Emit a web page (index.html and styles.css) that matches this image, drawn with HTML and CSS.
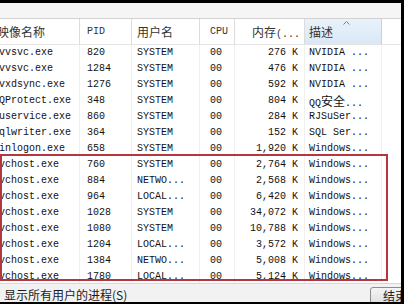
FILE: index.html
```html
<!DOCTYPE html>
<html lang="zh-CN">
  <head>
    <meta charset="UTF-8" />
    <title>任务管理器</title>
    <link rel="stylesheet" href="styles.css">
  </head>
  <body>
    <div class="window">
      <div class="toolbar"></div>
      <section class="list">
        <div class="row head">
          <span class="name"><span class="cjk">映像名称</span></span>
          <span class="pid">PID</span>
          <span class="user"><span class="cjk">用户名</span></span>
          <span class="cpu">CPU</span>
          <span class="mem"><span class="cjk">内存</span>(...</span>
          <span class="desc sorted">
            <span class="cjk">描述</span>
            <svg class="arrow" width="7" height="4" viewBox="0 0 7 4"><polyline points="0.5,3.5 3.5,0.5 6.5,3.5" fill="none" stroke="#6f8096" /></svg>
          </span>
          <span class="rest"></span>
        </div>

        <div class="row"><span class="name">nvvsvc.exe</span><span class="pid">820</span><span class="user">SYSTEM</span><span class="cpu">00</span><span class="mem">276 K</span><span class="desc">NVIDIA ...</span><span class="rest"></span></div>
        <div class="row"><span class="name">nvvsvc.exe</span><span class="pid">1284</span><span class="user">SYSTEM</span><span class="cpu">00</span><span class="mem">476 K</span><span class="desc">NVIDIA ...</span><span class="rest"></span></div>
        <div class="row"><span class="name">nvxdsync.exe</span><span class="pid">1276</span><span class="user">SYSTEM</span><span class="cpu">00</span><span class="mem">592 K</span><span class="desc">NVIDIA ...</span><span class="rest"></span></div>
        <div class="row"><span class="name">QQProtect.exe</span><span class="pid">348</span><span class="user">SYSTEM</span><span class="cpu">00</span><span class="mem">804 K</span><span class="desc">QQ<span class="cjk">安全</span>...</span><span class="rest"></span></div>
        <div class="row"><span class="name">suservice.exe</span><span class="pid">860</span><span class="user">SYSTEM</span><span class="cpu">00</span><span class="mem">284 K</span><span class="desc">RJSuSer...</span><span class="rest"></span></div>
        <div class="row"><span class="name">sqlwriter.exe</span><span class="pid">364</span><span class="user">SYSTEM</span><span class="cpu">00</span><span class="mem">152 K</span><span class="desc">SQL Ser...</span><span class="rest"></span></div>
        <div class="row"><span class="name">winlogon.exe</span><span class="pid">658</span><span class="user">SYSTEM</span><span class="cpu">00</span><span class="mem">1,920 K</span><span class="desc">Windows...</span><span class="rest"></span></div>
        <div class="row"><span class="name">svchost.exe</span><span class="pid">760</span><span class="user">SYSTEM</span><span class="cpu">00</span><span class="mem">2,764 K</span><span class="desc">Windows...</span><span class="rest"></span></div>
        <div class="row"><span class="name">svchost.exe</span><span class="pid">884</span><span class="user">NETWO...</span><span class="cpu">00</span><span class="mem">2,568 K</span><span class="desc">Windows...</span><span class="rest"></span></div>
        <div class="row"><span class="name">svchost.exe</span><span class="pid">964</span><span class="user">LOCAL...</span><span class="cpu">00</span><span class="mem">6,420 K</span><span class="desc">Windows...</span><span class="rest"></span></div>
        <div class="row"><span class="name">svchost.exe</span><span class="pid">1028</span><span class="user">SYSTEM</span><span class="cpu">00</span><span class="mem">34,072 K</span><span class="desc">Windows...</span><span class="rest"></span></div>
        <div class="row"><span class="name">svchost.exe</span><span class="pid">1080</span><span class="user">SYSTEM</span><span class="cpu">00</span><span class="mem">10,788 K</span><span class="desc">Windows...</span><span class="rest"></span></div>
        <div class="row"><span class="name">svchost.exe</span><span class="pid">1204</span><span class="user">LOCAL...</span><span class="cpu">00</span><span class="mem">3,572 K</span><span class="desc">Windows...</span><span class="rest"></span></div>
        <div class="row"><span class="name">svchost.exe</span><span class="pid">1384</span><span class="user">NETWO...</span><span class="cpu">00</span><span class="mem">5,008 K</span><span class="desc">Windows...</span><span class="rest"></span></div>
        <div class="row"><span class="name">svchost.exe</span><span class="pid">1780</span><span class="user">LOCAL...</span><span class="cpu">00</span><span class="mem">5,124 K</span><span class="desc">Windows...</span><span class="rest"></span></div>

        <div class="marker"></div>
      </section>
      <footer class="footer">
        <span class="cjk">显示所有用户的进程(S)</span>
        <button class="end"><span class="cjk">结束进程</span></button>
      </footer>
    </div>
  </body>
</html>
```

FILE: styles.css
```css
body {
  margin: 0;
  padding: 0;
  background-color: #000;
  font-family: "Liberation Mono", "Noto Sans CJK SC", monospace;
  font-size: 10px;
  color: #111;
}

.cjk {
  font-family: "Noto Sans CJK SC", sans-serif;
  font-size: 12px;
}

.window {
  width: 401px;
  height: 299px;
  margin-top: 3px;
  background-color: #f2f2f2;
  display: flex;
  flex-direction: column;
  overflow: hidden;
}

.toolbar {
  flex: none;
  height: 15px;
  background-color: #f5f5f5;
}

.list {
  position: relative;
  flex: none;
  height: 265px;
  box-sizing: border-box;
  background-color: #fff;
  border-top: 1px solid #d2d2d2;
  overflow: hidden;
}

.row {
  display: grid;
  grid-template-columns: 80px 52px 68px 35px 70px 77px 1fr;
  height: 16px;
  line-height: 16px;
  white-space: nowrap;
}

.row .cjk {
  line-height: 16px;
}

.row > span {
  display: block;
  box-sizing: border-box;
  overflow: hidden;
  border-right: 1px solid #f0f0f0;
}

.head {
  height: 26px;
  line-height: 25px;
  box-sizing: border-box;
  border-bottom: 1px solid #e4e4e4;
  color: #333;
}

.head .cjk {
  line-height: 25px;
}

.head > span {
  border-right: 1px solid #dcdcdc;
}

.name {
  text-indent: -7px;
}
.head .name {
  text-indent: -3px;
}
.pid {
  padding-left: 7px;
}
.user {
  padding-left: 5px;
}
.cpu {
  padding-left: 10px;
}
.mem {
  text-align: right;
  padding-right: 6px;
}
.head .mem {
  padding-right: 4px;
}
.desc {
  padding-left: 4px;
}

.head .sorted {
  position: relative;
  background: linear-gradient(#e9f2fb, #d9e8f6);
  border-right: 1px solid #bcd3ea;
}

.arrow {
  position: absolute;
  top: 2px;
  left: 38px;
}

.row .rest {
  border-right: none;
}

.marker {
  position: absolute;
  left: 0;
  top: 135px;
  width: 388px;
  height: 127px;
  box-sizing: border-box;
  border: 2px solid #b6363f;
}

.footer {
  flex: 1;
  display: flex;
  align-items: flex-start;
  border-top: 1px solid #d8d8d8;
  padding-left: 4px;
  line-height: 21px;
  color: #1a1a1a;
}

.end {
  margin: 3px -29px 0 auto;
  width: 60px;
  height: 20px;
  padding: 0 0 0 12px;
  text-align: left;
  line-height: 16px;
  border: 1px solid #8c8c8c;
  border-radius: 3px;
  background: linear-gradient(#f4f4f4, #dcdcdc);
  color: #222;
}

.end .cjk {
  line-height: 16px;
}
```
